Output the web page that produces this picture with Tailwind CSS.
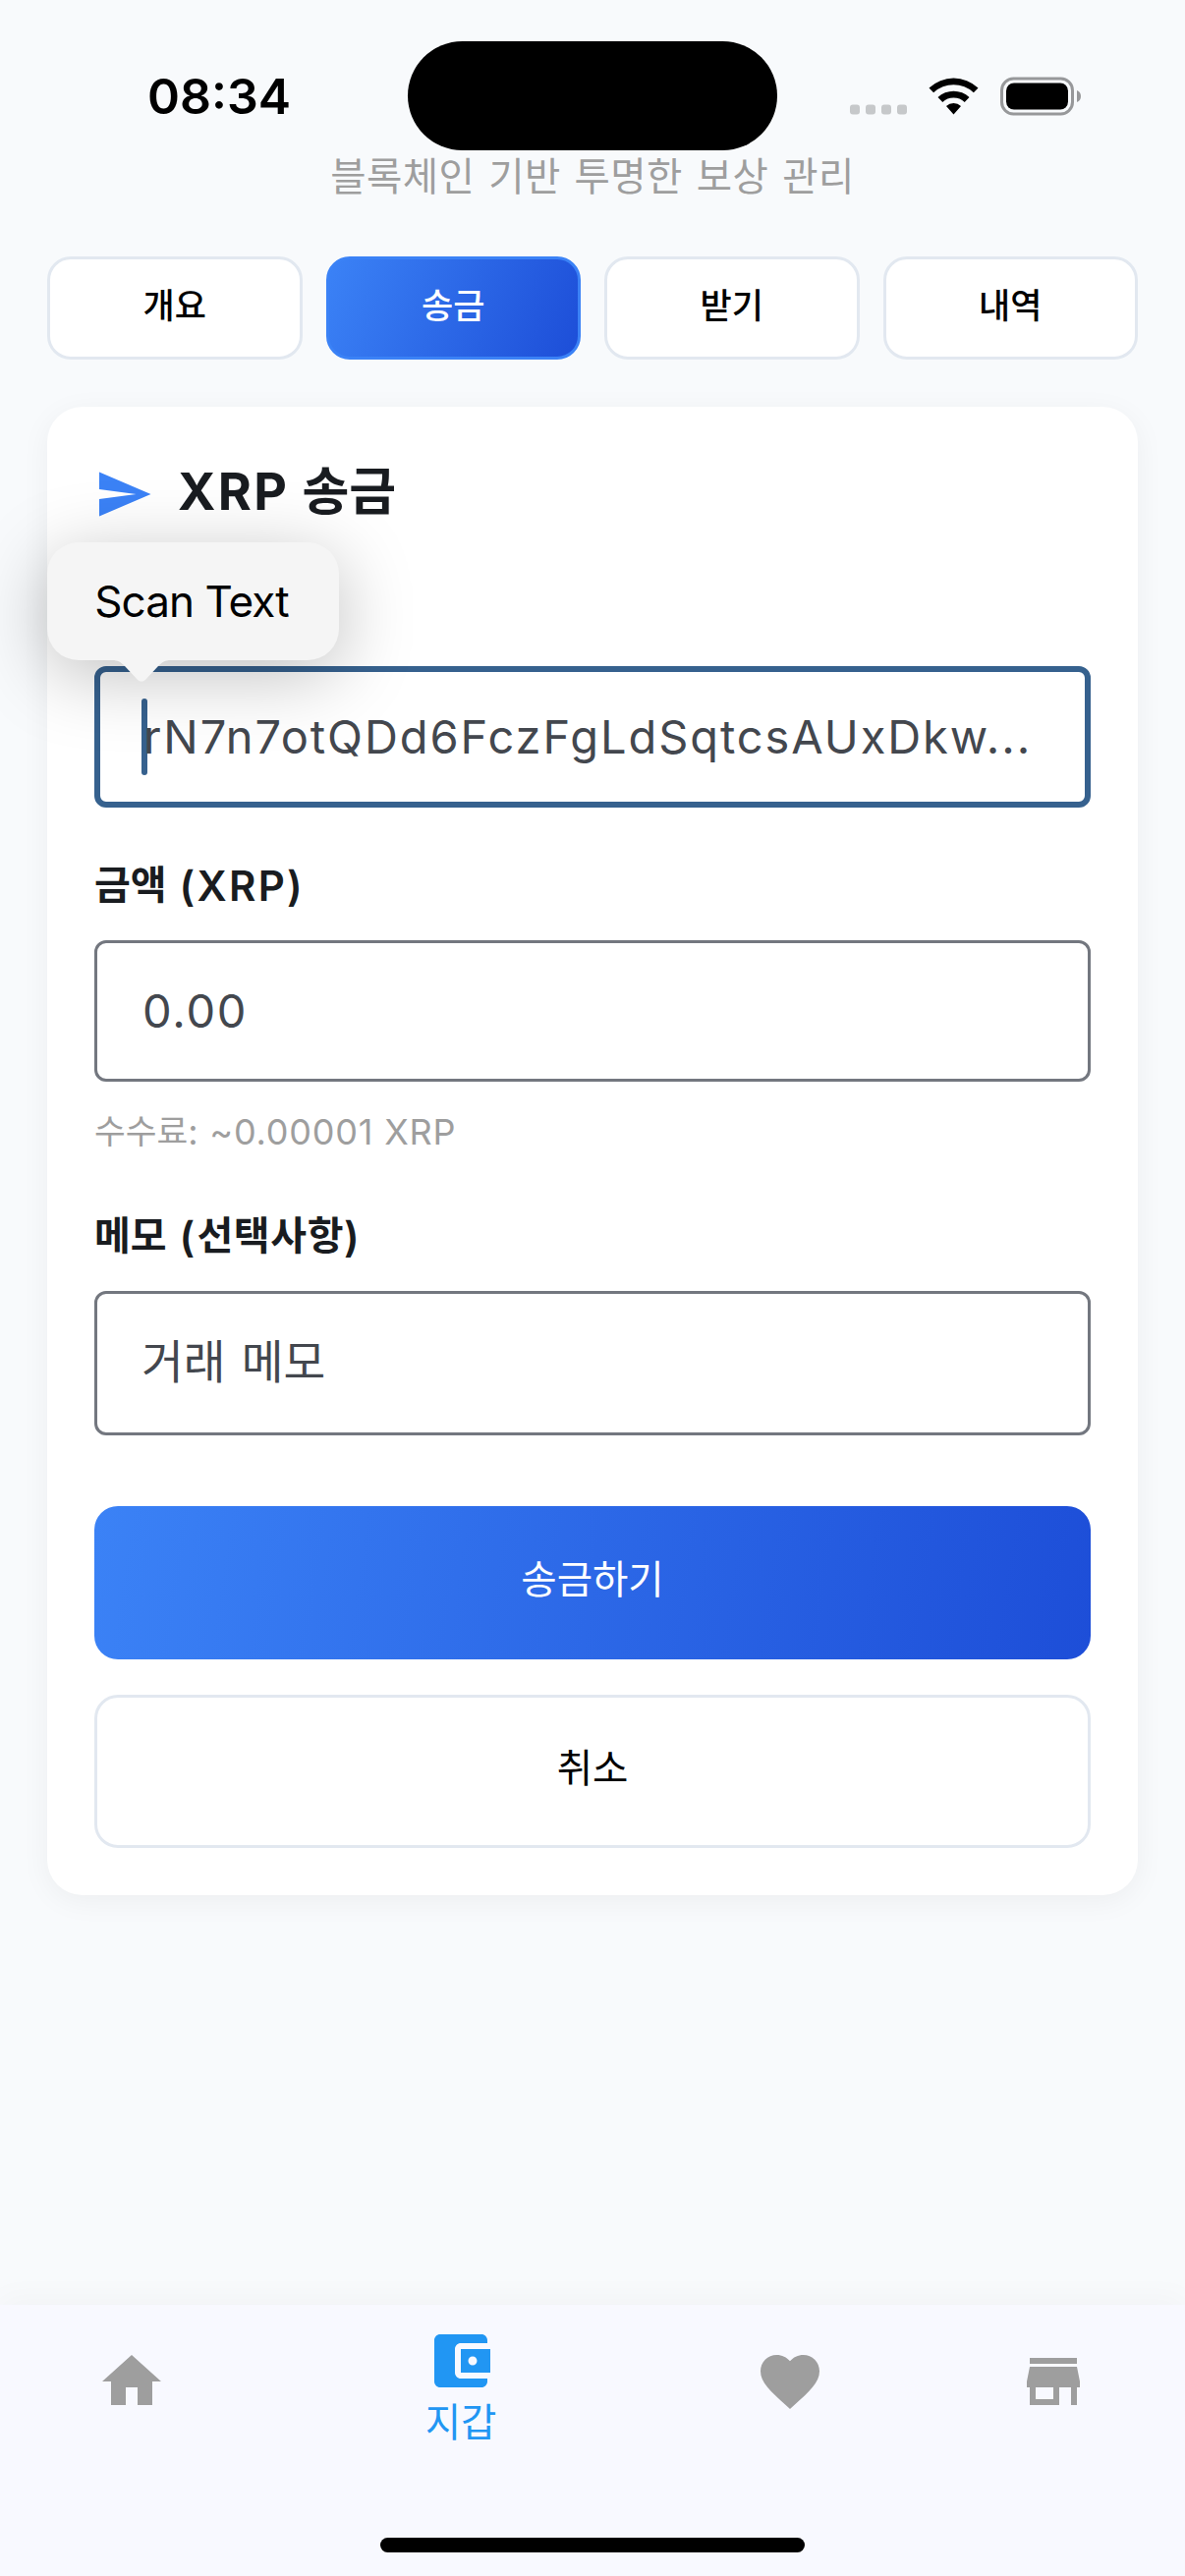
<!DOCTYPE html>
<html lang="ko">
<head>
<meta charset="utf-8">
<title>XRP 지갑</title>
<script src="https://cdn.jsdelivr.net/npm/@tailwindcss/browser@4"></script>
</head>
<body class="bg-[#f8fafc]">
<div class="flex h-[2622px] w-[1206px] flex-col overflow-hidden bg-[#f8fafc] font-['Inter','Noto_Sans_CJK_KR',sans-serif] text-black">

  <!-- Status bar -->
  <header class="flex h-[153px] shrink-0 items-end justify-between">
    <div class="flex h-[111px] w-[415px] items-center pl-[150px] text-[50px] leading-none font-semibold">08:34</div>
    <div class="mb-[0.5px] h-[111px] w-[376px] rounded-full bg-black"></div>
    <div class="flex h-[111px] w-[415px] items-center pl-[74px]">
      <svg class="h-[40px] w-[236px]" viewBox="0 0 236 40">
        <g fill="#c6c8ca"><rect x="0" y="28.500" width="10" height="10" rx="3"/><rect x="16" y="28.500" width="10" height="10" rx="3"/><rect x="32" y="28.500" width="10" height="10" rx="3"/><rect x="48" y="28.500" width="10" height="10" rx="3"/></g>
        <path d="M80.500 11.500a36.500 36.500 0 0 1 50 0l-4.600 4.800a30 30 0 0 0-40.800 0z M89.500 21a23.500 23.500 0 0 1 32 0l-4.800 5a16.500 16.500 0 0 0-22.400 0z M98 30a11 11 0 0 1 15 0l-7.500 8.500z"/>
        <rect x="154.500" y="2" width="72" height="36" rx="12" fill="none" stroke="#97989a" stroke-width="3"/>
        <rect x="159" y="6.500" width="63" height="27" rx="8"/>
        <path d="M231 14a6.500 6.500 0 0 1 0 12z" fill="#97989a"/>
      </svg>
    </div>
  </header>

  <p class="h-[108px] shrink-0 text-center text-[39.5px] leading-[54px] tracking-[0.4px] [word-spacing:2.4px] text-[#9e9e9e]">블록체인 기반 투명한 보상 관리</p>

  <!-- Tabs -->
  <nav class="mx-12 grid h-[105px] shrink-0 grid-cols-4 gap-6 text-[35px] font-medium">
    <button class="rounded-3xl border-3 border-[#e2e8f0] bg-white pb-[4px]">개요</button>
    <button class="rounded-3xl border-3 border-[#3b82f6] bg-[linear-gradient(112deg,#3b82f6,#1d4ed8)] pb-[4px] text-white">송금</button>
    <button class="rounded-3xl border-3 border-[#e2e8f0] bg-white pb-[4px]">받기</button>
    <button class="rounded-3xl border-3 border-[#e2e8f0] bg-white pb-[4px]">내역</button>
  </nav>

  <!-- Send card -->
  <main class="relative mx-12 mt-12 flex h-[1515px] shrink-0 flex-col rounded-[36px] bg-white px-12 shadow-[0_6px_30px_rgba(0,0,0,0.05)]">
    <div class="flex h-[264px] gap-[25px] pt-[48px]">
      <svg class="mt-[11px] size-[60px]" viewBox="0 0 24 24" fill="#3b82f6"><path d="M2.010 21 23 12 2.010 3 2 10l15 2-15 2z"/></svg>
      <h1 class="flex items-baseline gap-[13px] text-[52px] leading-[78px] font-semibold text-[#191c20]"><span class="font-bold tracking-[2.4px]">XRP</span><span>송금</span></h1>
    </div>
    <div class="flex h-[144px] items-center rounded-xl border-6 border-[#36618e] px-[42px]">
      <div class="h-[78px] w-[6px] shrink-0 rounded-full bg-[#36618e]"></div>
      <span class="-ml-[4px] text-[47px] tracking-[1.93px] whitespace-nowrap text-[#43474e]">rN7n7otQDd6FczFgLdSqtcsAUxDkw...</span>
    </div>
    <label class="h-[135px] pt-[46.5px] text-[42px] leading-[63px] font-semibold tracking-[2.3px] text-[#191c20]"><span class="align-[2px] text-[40px] tracking-[0px]">금액</span> (XRP)</label>
    <div class="flex h-[144px] items-center rounded-xl border-3 border-[#73777f] px-[46px] text-[47px] tracking-[1.8px] text-[#43474e]">0.00</div>
    <p class="h-[78px] pt-[24px] text-[36px] leading-[54px] tracking-[0.8px] text-[#9e9e9e]"><span class="align-[1px] text-[34.5px] tracking-[0px]">수수료</span>: ~0.00001 XRP</p>
    <label class="h-[135px] pt-[46.5px] text-[42px] leading-[63px] font-semibold tracking-[2.3px] text-[#191c20]"><span class="align-[2px] text-[40px] tracking-[0px]">메모</span> (<span class="align-[2px] text-[40px] tracking-[0.6px]">선택사항</span>)</label>
    <div class="flex h-[147px] items-center rounded-xl border-3 border-[#73777f] px-[45px] pb-[2px] text-[46.5px] [word-spacing:3px] text-[#43474e]">거래 메모</div>
    <button class="mt-[72px] h-[156px] rounded-3xl bg-[linear-gradient(98.75deg,#3b82f6,#1d4ed8)] pb-[4px] text-[39.5px] text-white">송금하기</button>
    <button class="mt-9 h-[156px] rounded-3xl border-3 border-[#e2e8f0] pb-[4px] text-[39.5px]">취소</button>

    <!-- Text-edit popover -->
    <div class="absolute top-[138px] left-0 flex h-[120px] w-[297px] items-center justify-center rounded-[32px] bg-[#f5f5f5] pr-[3px] text-[44px] tracking-[-0.9px] shadow-[0_15px_75px_rgba(0,0,0,0.25)]">
      Scan Text
      <svg class="absolute top-[119px] left-[66px] h-[24px] w-[60px]" viewBox="0 0 60 24" fill="#f5f5f5"><path d="M0 0v1c6 0 9 2 13 6l13 14q4 3.500 8 0l13-14c4-4 7-6 13-6V0z"/></svg>
    </div>
  </main>

  <div class="grow"></div>

  <!-- Bottom navigation -->
  <footer class="flex h-[276px] shrink-0 flex-col bg-[#f8f9ff] shadow-[0_-6px_30px_rgba(0,0,0,0.03)]">
    <div class="grid h-[237px] grid-cols-[2fr_3fr_2fr_2fr] justify-items-center text-[#9e9e9e]">
      <svg class="mt-[42px] size-[72px]" viewBox="0 0 24 24" fill="currentColor"><path d="M10 20v-6h4v6h5v-8h3L12 3 2 12h3v8z"/></svg>
      <div class="flex flex-col items-center pt-[21px] text-[#2196f3]">
        <svg class="size-[72px]" viewBox="0 0 24 24" fill="currentColor"><path d="M21 18v1c0 1.100-.9 2-2 2H5c-1.110 0-2-.9-2-2V5c0-1.100.89-2 2-2h14c1.100 0 2 .9 2 2v1h-9c-1.110 0-2 .9-2 2v8c0 1.100.89 2 2 2h9zm-9-2h10V8H12v8zm4-2.500c-.83 0-1.500-.67-1.500-1.500s.67-1.500 1.500-1.500 1.500.67 1.500 1.500-.67 1.500-1.500 1.500z"/></svg>
        <span class="text-[39.5px] leading-[54px]">지갑</span>
      </div>
      <svg class="mt-[42px] size-[72px]" viewBox="0 0 24 24" fill="currentColor"><path d="m12 21.350-1.450-1.320C5.400 15.360 2 12.280 2 8.500 2 5.420 4.420 3 7.500 3c1.740 0 3.410.81 4.500 2.090C13.090 3.810 14.760 3 16.500 3 19.580 3 22 5.420 22 8.500c0 3.780-3.400 6.860-8.550 11.540L12 21.350z"/></svg>
      <svg class="mt-[42px] size-[72px]" viewBox="0 0 24 24" fill="currentColor"><path d="M20 4H4v2h16V4zm1 10v-2l-1-5H4l-1 5v2h1v6h10v-6h4v6h2v-6h1zm-9 4H6v-4h6v4z"/></svg>
    </div>
    <div class="mx-auto h-[15px] w-[432px] rounded-full bg-black"></div>
  </footer>
</div>
</body>
</html>
